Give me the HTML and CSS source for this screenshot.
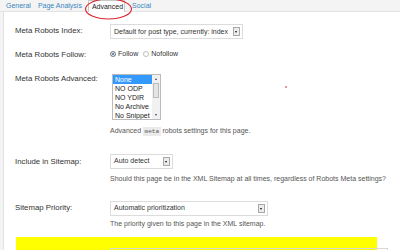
FILE: index.html
```html
<!DOCTYPE html>
<html lang="en">
<head>
  <meta charset="UTF-8" />
  <title>SEO - Advanced</title>
  <link rel="stylesheet" href="styles.css">
</head>
<body>

  <div class="tabs">
    <a class="tab" href="#">General</a>
    <a class="tab" href="#">Page Analysis</a>
    <a class="tab active" href="#">Advanced</a>
    <a class="tab" href="#">Social</a>
    <svg class="circle" width="140" height="24" viewBox="0 0 140 24">
      <ellipse cx="108.5" cy="9" rx="23" ry="10" fill="none" stroke="#d8262c" stroke-width="1.1" />
    </svg>
  </div>

  <div class="panel">
    <div class="row row-index">
      <div class="label">Meta Robots Index:</div>
      <div class="field">
        <div class="select w-index"><span>Default for post type, currently: index</span><i class="arrow"></i></div>
      </div>
    </div>

    <div class="row row-follow">
      <div class="label">Meta Robots Follow:</div>
      <div class="field radios">
        <span class="radio checked"></span><span class="radio-text">Follow</span>
        <span class="radio"></span><span class="radio-text">Nofollow</span>
      </div>
    </div>

    <div class="row row-adv">
      <div class="label">Meta Robots Advanced:</div>
      <div class="field">
        <div class="listbox">
          <div class="options">
            <div class="option selected">None</div>
            <div class="option">NO ODP</div>
            <div class="option">NO YDIR</div>
            <div class="option">No Archive</div>
            <div class="option">No Snippet</div>
          </div>
          <div class="scrollbar">
            <span class="sb-btn up"></span>
            <span class="thumb"></span>
            <span class="track"></span>
            <span class="sb-btn down"></span>
          </div>
        </div>
        <div class="desc desc-adv">Advanced <code>meta</code> robots settings for this page.</div>
      </div>
    </div>

    <div class="row row-sitemap">
      <div class="label">Include in Sitemap:</div>
      <div class="field">
        <div class="select w-auto"><span>Auto detect</span><i class="arrow"></i></div>
        <div class="desc desc-sitemap">Should this page be in the XML Sitemap at all times, regardless of Robots Meta settings?</div>
      </div>
    </div>

    <div class="row row-priority">
      <div class="label">Sitemap Priority:</div>
      <div class="field">
        <div class="select w-priority"><span>Automatic prioritization</span><i class="arrow"></i></div>
        <div class="desc desc-priority">The priority given to this page in the XML sitemap.</div>
      </div>
    </div>

    <div class="row highlight">
      <div class="label">Canonical URL:</div>
      <div class="field">
        <div class="input"></div>
      </div>
    </div>
  </div>

  <span class="dot"></span>

</body>
</html>
```

FILE: styles.css
```css
body {
  margin: 0;
  padding: 0;
  font-family: "Liberation Sans", Arial, sans-serif;
  background-color: #f4f4f4;
  color: #333;
  overflow: hidden;
  height: 250px;
  position: relative;
}

.tabs {
  position: relative;
  display: flex;
  align-items: flex-start;
  gap: 7px;
  height: 11px;
  padding-left: 6px;
  font-size: 7px;
  line-height: 11px;
  border-bottom: 1px solid #e3e3e3;
}

.tab {
  color: #3a86bf;
  text-decoration: none;
  white-space: nowrap;
}

.tab.active {
  background: #fff;
  color: #222;
  border: 1px solid #c9c9c9;
  border-bottom: none;
  padding: 0 1px 0 3px;
  margin-left: -1px;
}

.circle {
  position: absolute;
  left: 0;
  top: 0;
}

.panel {
  margin-left: 3px;
  background: #fff;
  border-left: 1px solid #e2e2e2;
  padding-left: 11px;
  padding-top: 1px;
  height: 237px;
  overflow: hidden;
}

.row {
  display: flex;
  align-items: flex-start;
}

.label {
  flex: none;
  width: 95px;
  font-size: 7.8px;
  line-height: 10px;
  white-space: nowrap;
}

.field {
  font-size: 7px;
  line-height: 10px;
}

.row-index { margin-top: 11px; }
.row-index .label { padding-top: 2px; }

.row-follow { margin-top: 10px; }
.row-follow .label { padding-top: 0.5px; }

.row-adv { margin-top: 14px; }

.row-sitemap { margin-top: 17px; }
.row-sitemap .label { padding-top: 3px; }

.row-priority { margin-top: 17px; }
.row-priority .label { padding-top: 2px; }

/* fake dropdowns */
.select {
  display: flex;
  align-items: center;
  justify-content: space-between;
  box-sizing: border-box;
  height: 15px;
  border: 1px solid #dcdcdc;
  background: #fff;
  padding: 0 2px 0 3px;
  white-space: nowrap;
}

.w-index { width: 133px; }
.w-auto { width: 63px; }
.w-priority { width: 158px; }

.arrow {
  position: relative;
  flex: none;
  box-sizing: border-box;
  width: 7px;
  height: 9px;
  border: 1px solid #a8a8a8;
  background: #ececec;
}

.arrow::after {
  content: "";
  position: absolute;
  left: 1px;
  top: 3px;
  border-left: 1.5px solid transparent;
  border-right: 1.5px solid transparent;
  border-top: 2px solid #111;
}

/* radios */
.radios {
  display: flex;
  align-items: center;
  height: 10px;
}

.radio {
  box-sizing: border-box;
  width: 6px;
  height: 6px;
  border-radius: 50%;
  border: 1px solid #bdbdbd;
  background: #fff;
  margin-right: 2px;
}

.radio.checked {
  border-color: #8a8a8a;
  background: #3e6b96;
  box-shadow: inset 0 0 0 1px #fff;
}

.radio-text {
  margin-right: 5px;
}

/* multi select */
.listbox {
  display: flex;
  box-sizing: border-box;
  width: 49px;
  height: 46px;
  margin-left: 2px;
  border: 1px solid #bbb;
  background: #fff;
  overflow: hidden;
}

.options {
  width: 39px;
  flex: none;
}

.option {
  font-size: 7px;
  line-height: 9px;
  padding-left: 2px;
  white-space: nowrap;
  color: #222;
}

.option.selected {
  background: #3399ff;
  color: #fff;
}

.scrollbar {
  display: flex;
  flex-direction: column;
  width: 8px;
  background: #f1f1f1;
}

.sb-btn {
  position: relative;
  height: 8px;
  flex: none;
}

.sb-btn::after {
  content: "";
  position: absolute;
  left: 2.5px;
  border-left: 1.5px solid transparent;
  border-right: 1.5px solid transparent;
}

.sb-btn.up::after {
  top: 3px;
  border-bottom: 2px solid #444;
}

.sb-btn.down::after {
  top: 3px;
  border-top: 2px solid #444;
}

.thumb {
  flex: none;
  height: 15px;
  margin: 0 1px;
  box-sizing: border-box;
  border: 1px solid #bcbcbc;
  background: #e4e4e4;
}

.track {
  flex: 1;
}

.desc {
  color: #555;
  white-space: nowrap;
}

.desc-adv { margin-top: 6px; }
.desc-sitemap { margin-top: 5px; }
.desc-priority { margin-top: 3px; }

code {
  font-family: "Liberation Mono", monospace;
  font-size: 6px;
  background: #ebebeb;
  padding: 1px 1.5px;
}

/* highlighted canonical row */
.highlight {
  margin-top: 8px;
  margin-left: 1px;
  width: 361px;
  height: 40px;
  background: #ffff00;
}

.highlight .label {
  width: 94px;
  padding-top: 12px;
}

.input {
  width: 278px;
  height: 16px;
  margin-top: 11px;
  box-sizing: border-box;
  border: 1px solid #d8d8d8;
}

.dot {
  position: absolute;
  left: 285px;
  top: 86px;
  width: 1.5px;
  height: 1.5px;
  background: #d99;
}
```
